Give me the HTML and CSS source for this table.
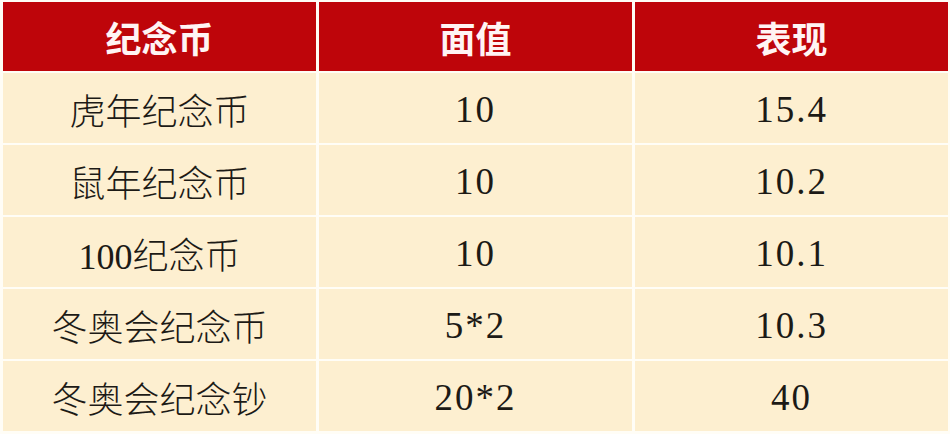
FILE: index.html
```html
<!DOCTYPE html>
<html lang="zh-CN">
<head>
<meta charset="utf-8">
<title>纪念币</title>
<link rel="stylesheet" href="styles.css">
</head>
<body>
<div class="table">
  <div class="cell head">纪念币</div>
  <div class="cell head">面值</div>
  <div class="cell head">表现</div>

  <div class="cell">虎年纪念币</div>
  <div class="cell num">10</div>
  <div class="cell num">15.4</div>

  <div class="cell">鼠年纪念币</div>
  <div class="cell num">10</div>
  <div class="cell num">10.2</div>

  <div class="cell">100纪念币</div>
  <div class="cell num">10</div>
  <div class="cell num">10.1</div>

  <div class="cell">冬奥会纪念币</div>
  <div class="cell num">5*2</div>
  <div class="cell num">10.3</div>

  <div class="cell">冬奥会纪念钞</div>
  <div class="cell num">20*2</div>
  <div class="cell num">40</div>
</div>
</body>
</html>
```

FILE: styles.css
```css
html, body {
  margin: 0;
  padding: 0;
  background: #fffdf6;
}
.table {
  width: 950px;
  height: 434px;
  box-sizing: border-box;
  padding: 2px 2px 3px 3px;
  display: grid;
  grid-template-columns: 1fr 1fr 1fr;
  grid-template-rows: 69px repeat(5, 70px);
  column-gap: 3px;
  row-gap: 2px;
}
.cell {
  background: #fdefd0;
  display: flex;
  align-items: center;
  justify-content: center;
  font-family: "Liberation Serif", "Noto Sans CJK SC", serif;
  font-weight: 300;
  font-size: 36px;
  color: #1c1a16;
  padding-top: 2px;
  box-sizing: border-box;
}
.head {
  background: #be050a;
  color: #fff4f4;
  font-family: "Noto Sans CJK SC", sans-serif;
  font-weight: 700;
  font-size: 36px;
  padding-top: 0;
}
.num {
  font-weight: 400;
  font-size: 37px;
  letter-spacing: 2px;
}
```
